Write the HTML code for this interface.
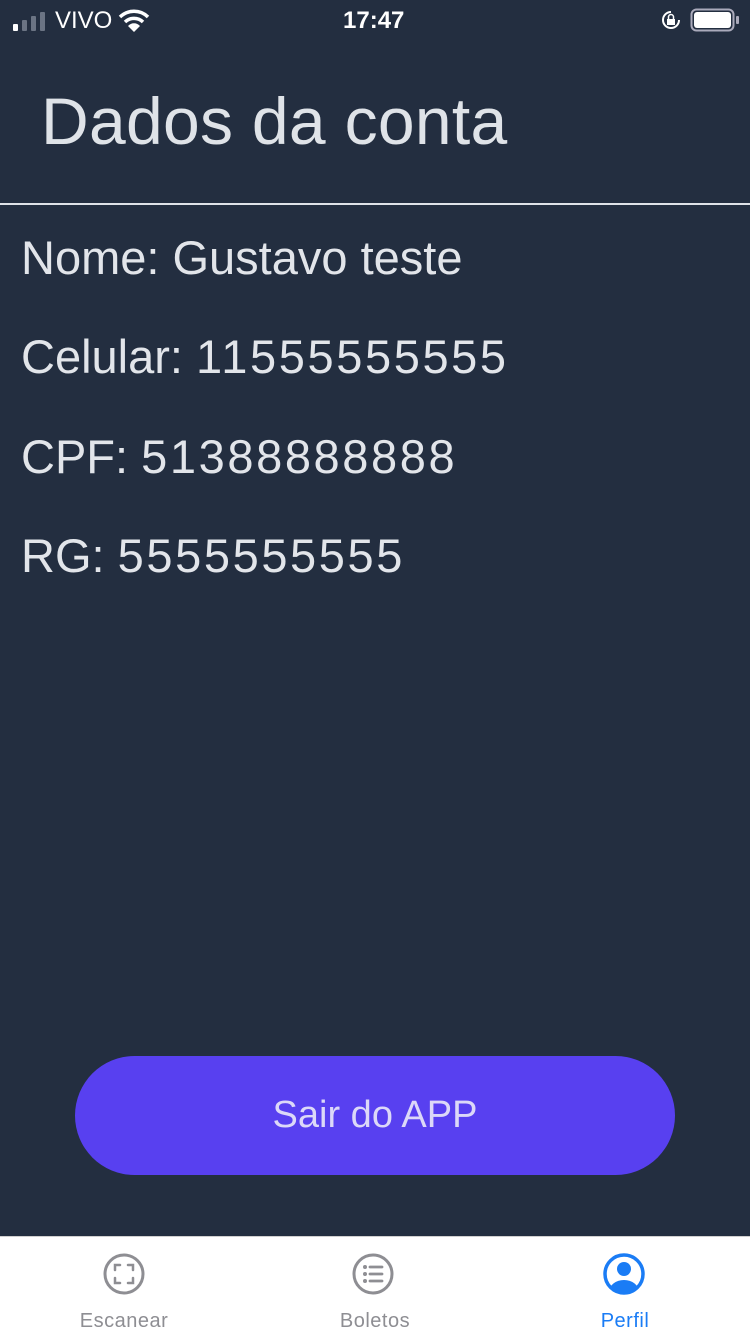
<!DOCTYPE html>
<html><head><meta charset="utf-8"><style>
*{margin:0;padding:0;box-sizing:border-box}
body{width:750px;height:1334px;background:#232e40;font-family:"Liberation Sans",sans-serif;position:relative;overflow:hidden;color:#dfe3e8}
.abs{position:absolute}
.title{left:41px;top:83px;font-size:66px;color:#dfe3e8;white-space:nowrap;letter-spacing:0.3px}
.line{left:0;top:203px;width:750px;height:2px;background:#dfe3e8}
.f{left:21px;font-size:47px;white-space:nowrap;color:#e2e5ea}
.n{letter-spacing:2.6px}
.btn{left:75px;top:1056px;width:600px;height:119px;border-radius:60px;background:#5840f0;color:#dcd8f8;font-size:38px;display:flex;align-items:center;justify-content:center}
.tab{left:0;top:1236px;width:750px;height:98px;background:#fff;border-top:1px solid #d0d0d0}
.lbl{font-size:20px;top:1310px;width:160px;text-align:center;color:#8e8e93;letter-spacing:0.5px}
.sb{top:6px;font-size:24px;color:#fff}
</style></head><body>
<div class="abs sb" style="left:13px;top:10px">
<svg width="34" height="20"><rect x="0" y="13" width="5" height="7" rx="1" fill="#fff"/><rect x="9" y="9" width="5" height="11" rx="1" fill="#6b7484"/><rect x="18" y="5" width="5" height="15" rx="1" fill="#6b7484"/><rect x="27" y="1" width="5" height="19" rx="1" fill="#6b7484"/></svg></div>
<div class="abs sb" style="left:55px;top:7px">VIVO</div>
<svg class="abs" style="left:118px;top:9px" width="32" height="24" viewBox="0 0 32 24"><path d="M2 8 A20 20 0 0 1 30 8" stroke="#fff" stroke-width="3.5" fill="none"/><path d="M7 13 A13 13 0 0 1 25 13" stroke="#fff" stroke-width="3.5" fill="none"/><path d="M16 23 L10 17 A8 8 0 0 1 22 17 Z" fill="#fff"/></svg>
<div class="abs sb" style="left:343px;top:7px;font-weight:bold">17:47</div>
<svg class="abs" style="left:660px;top:10px" width="22" height="20" viewBox="0 0 22 20"><path d="M11 2 A8 8 0 1 0 19 10" stroke="#fff" stroke-width="2" fill="none"/><rect x="7" y="9" width="8" height="6" fill="#fff"/><path d="M8.5 9 V7 a2.5 2.5 0 0 1 5 0 V9" stroke="#fff" stroke-width="1.5" fill="none"/></svg>
<svg class="abs" style="left:690px;top:8px" width="50" height="24" viewBox="0 0 50 24"><rect x="1.5" y="1.5" width="42" height="21" rx="5" stroke="#aab" stroke-width="2" fill="none"/><rect x="4" y="4" width="37" height="16" rx="3" fill="#fff"/><rect x="46" y="8" width="3" height="8" rx="1" fill="#aab"/></svg>
<div class="abs title">Dados da conta</div>
<div class="abs line"></div>
<div class="abs f" style="top:230px">Nome: Gustavo teste</div>
<div class="abs f" style="top:329px">Celular: <span class="n">11555555555</span></div>
<div class="abs f" style="top:429px">CPF: <span class="n">51388888888</span></div>
<div class="abs f" style="top:528px">RG: <span class="n">5555555555</span></div>
<div class="abs btn">Sair do APP</div>
<div class="abs tab"></div>
<svg class="abs" style="left:102px;top:1252px" width="44" height="44" viewBox="0 0 44 44"><circle cx="22" cy="22" r="19" stroke="#8e8e93" stroke-width="3" fill="none"/><path d="M13 18v-5h5M26 13h5v5M31 26v5h-5M18 31h-5v-5" stroke="#8e8e93" stroke-width="2.5" fill="none" stroke-linecap="round"/></svg>
<svg class="abs" style="left:351px;top:1252px" width="44" height="44" viewBox="0 0 44 44"><circle cx="22" cy="22" r="19" stroke="#8e8e93" stroke-width="3" fill="none"/><circle cx="14" cy="15" r="2" fill="#8e8e93"/><circle cx="14" cy="22" r="2" fill="#8e8e93"/><circle cx="14" cy="29" r="2" fill="#8e8e93"/><path d="M19 15h12M19 22h12M19 29h12" stroke="#8e8e93" stroke-width="2.8" stroke-linecap="round"/></svg>
<svg class="abs" style="left:602px;top:1252px" width="44" height="44" viewBox="0 0 44 44"><defs><clipPath id="c"><circle cx="22" cy="22" r="18"/></clipPath></defs><circle cx="22" cy="22" r="19" stroke="#1a7cf5" stroke-width="3.5" fill="none"/><circle cx="22" cy="17" r="7" fill="#1a7cf5"/><ellipse cx="22" cy="40" rx="15" ry="12" fill="#1a7cf5" clip-path="url(#c)"/></svg>
<div class="abs lbl" style="left:44px">Escanear</div>
<div class="abs lbl" style="left:295px">Boletos</div>
<div class="abs lbl" style="left:545px;color:#1a7cf5">Perfil</div>
</body></html>
